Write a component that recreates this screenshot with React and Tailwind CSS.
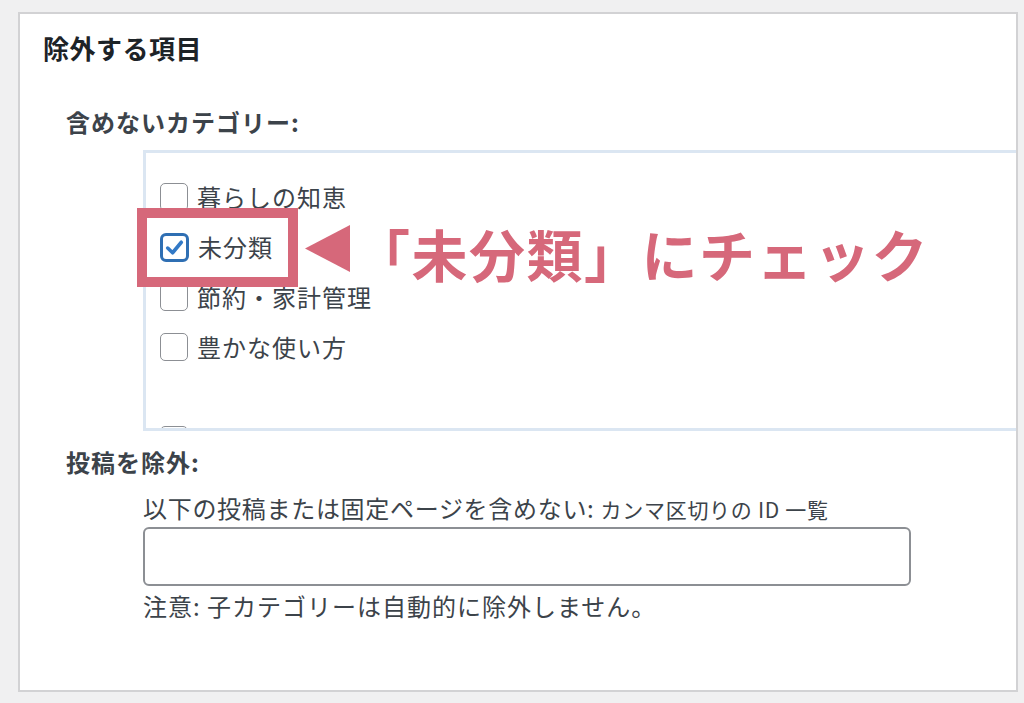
const FONT = { fontFamily: '"Noto Sans CJK JP", "Noto Sans", sans-serif' };

const categories = [
  { name: '暮らしの知恵', checked: false },
  { name: '未分類', checked: true },
  { name: '節約・家計管理', checked: false },
  { name: '豊かな使い方', checked: false },
];

function Checkbox({ checked }) {
  if (checked) {
    return (
      <span className="flex h-[29px] w-[29px] shrink-0 items-center justify-center rounded-[6px] border-[3px] border-[#2f6fb3] bg-white">
        <svg viewBox="0 0 20 20" className="h-[21px] w-[21px]">
          <path d="M3.5 10.5 L8.2 15 L16.5 5" fill="none" stroke="#3279c6" strokeWidth="3.4" strokeLinecap="round" strokeLinejoin="round" />
        </svg>
      </span>
    );
  }
  return <span className="block h-[28px] w-[28px] shrink-0 rounded-[5px] border-[1.5px] border-[#8c8f94] bg-white" />;
}

export default function App() {
  return (
    <div className="min-h-[703px] bg-[#f0f0f1] pt-[12px] pl-[18px] pr-[6px]" style={FONT}>
      <div className="relative h-[680px] overflow-hidden border-2 border-[#d2d2d4] bg-white text-[#3c434a]">
        {/* Section title */}
        <h2 className="pl-[23px] pt-[17px] text-[26px] font-bold leading-[34px] tracking-[0.5px] text-[#1d2327]">除外する項目</h2>

        {/* Categories */}
        <div className="mt-[42px] pl-[46px] text-[24px] font-bold leading-[30px] tracking-[1px]">含めないカテゴリー:</div>
        <div className="ml-[123px] mt-[13px] h-[281px] overflow-hidden border-[3px] border-r-0 border-[#dbe6f2] pl-[14px] pt-[19px]">
          {categories.map((c) => (
            <div key={c.name} className="flex h-[50px] items-center gap-[9px]">
              <Checkbox checked={c.checked} />
              <span className="text-[24px] leading-[30px] tracking-[1px]">{c.name}</span>
            </div>
          ))}
          <div className="mt-[43px] flex h-[50px] items-center">
            <Checkbox checked={false} />
          </div>
        </div>

        {/* Exclude posts */}
        <div className="mt-[16px] pl-[46px] text-[24px] font-bold leading-[30px] tracking-[1px]">投稿を除外:</div>
        <div className="ml-[123px] mt-[17px] text-[24px] leading-[28px] tracking-[0.7px]">
          以下の投稿または固定ページを含めない: <span className="text-[21px]">カンマ区切りの ID 一覧</span>
        </div>
        <div className="ml-[123px] mt-[4px] h-[59px] w-[768px] rounded-[6px] border-2 border-[#8c8f94] bg-white" />
        <div className="ml-[123px] mt-[6px] text-[24px] leading-[28px] tracking-[1px]">注意: 子カテゴリーは自動的に除外しません。</div>

        {/* Annotation overlay */}
        <div className="absolute left-[117px] top-[194px] h-[79px] w-[161px] border-[10px] border-[#d6687a]" />
        <svg className="absolute left-[285px] top-[211px]" width="46" height="47" viewBox="0 0 46 47">
          <polygon points="0,23.5 45,0 45,47" fill="#d6687a" />
        </svg>
        <div className="absolute left-[334px] top-[199px] text-[56px] font-bold leading-[80px] tracking-[1.5px] text-[#d6687a]">
          「未分類」にチェック
        </div>
      </div>
    </div>
  );
}
